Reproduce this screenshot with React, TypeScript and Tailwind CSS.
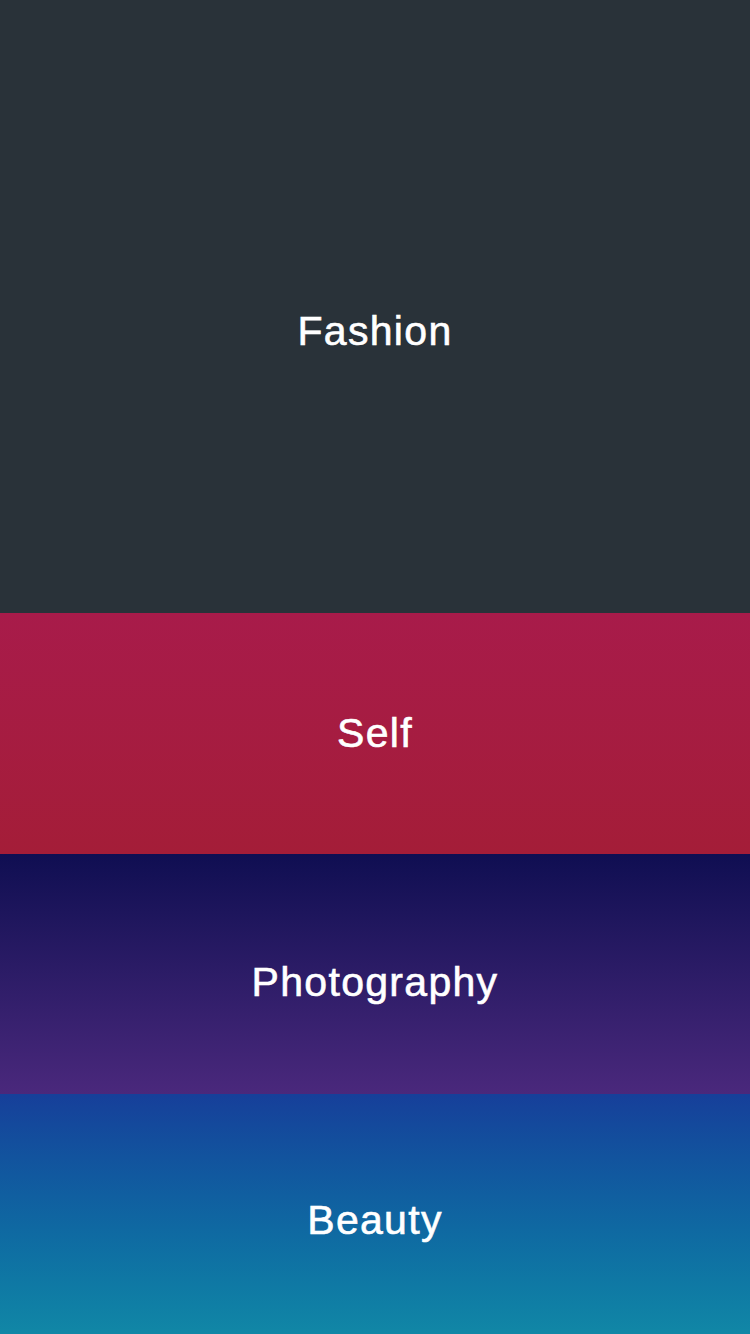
export default function App() {
  const sections = [
    { label: "Fashion", cls: "h-[613px] bg-[#293239] pt-[50px]" },
    { label: "Self", cls: "h-[241px] bg-gradient-to-b from-[#a81b4a] to-[#a41d38] pt-[0px]" },
    { label: "Photography", cls: "h-[240px] bg-gradient-to-b from-[#0f0e52] to-[#4a287c] pt-[16px]" },
    { label: "Beauty", cls: "h-[240px] bg-gradient-to-b from-[#163f9a] to-[#1187a6] pt-[12px]" },
  ];

  return (
    <div className="w-[750px] h-[1334px] flex flex-col font-['Liberation_Sans',Arial,sans-serif]">
      {sections.map((s) => (
        <div key={s.label} className={`${s.cls} flex items-center justify-center`}>
          <span className="text-white text-[41px] tracking-[1.3px] leading-none [-webkit-text-stroke:0.6px_white]">
            {s.label}
          </span>
        </div>
      ))}
    </div>
  );
}
